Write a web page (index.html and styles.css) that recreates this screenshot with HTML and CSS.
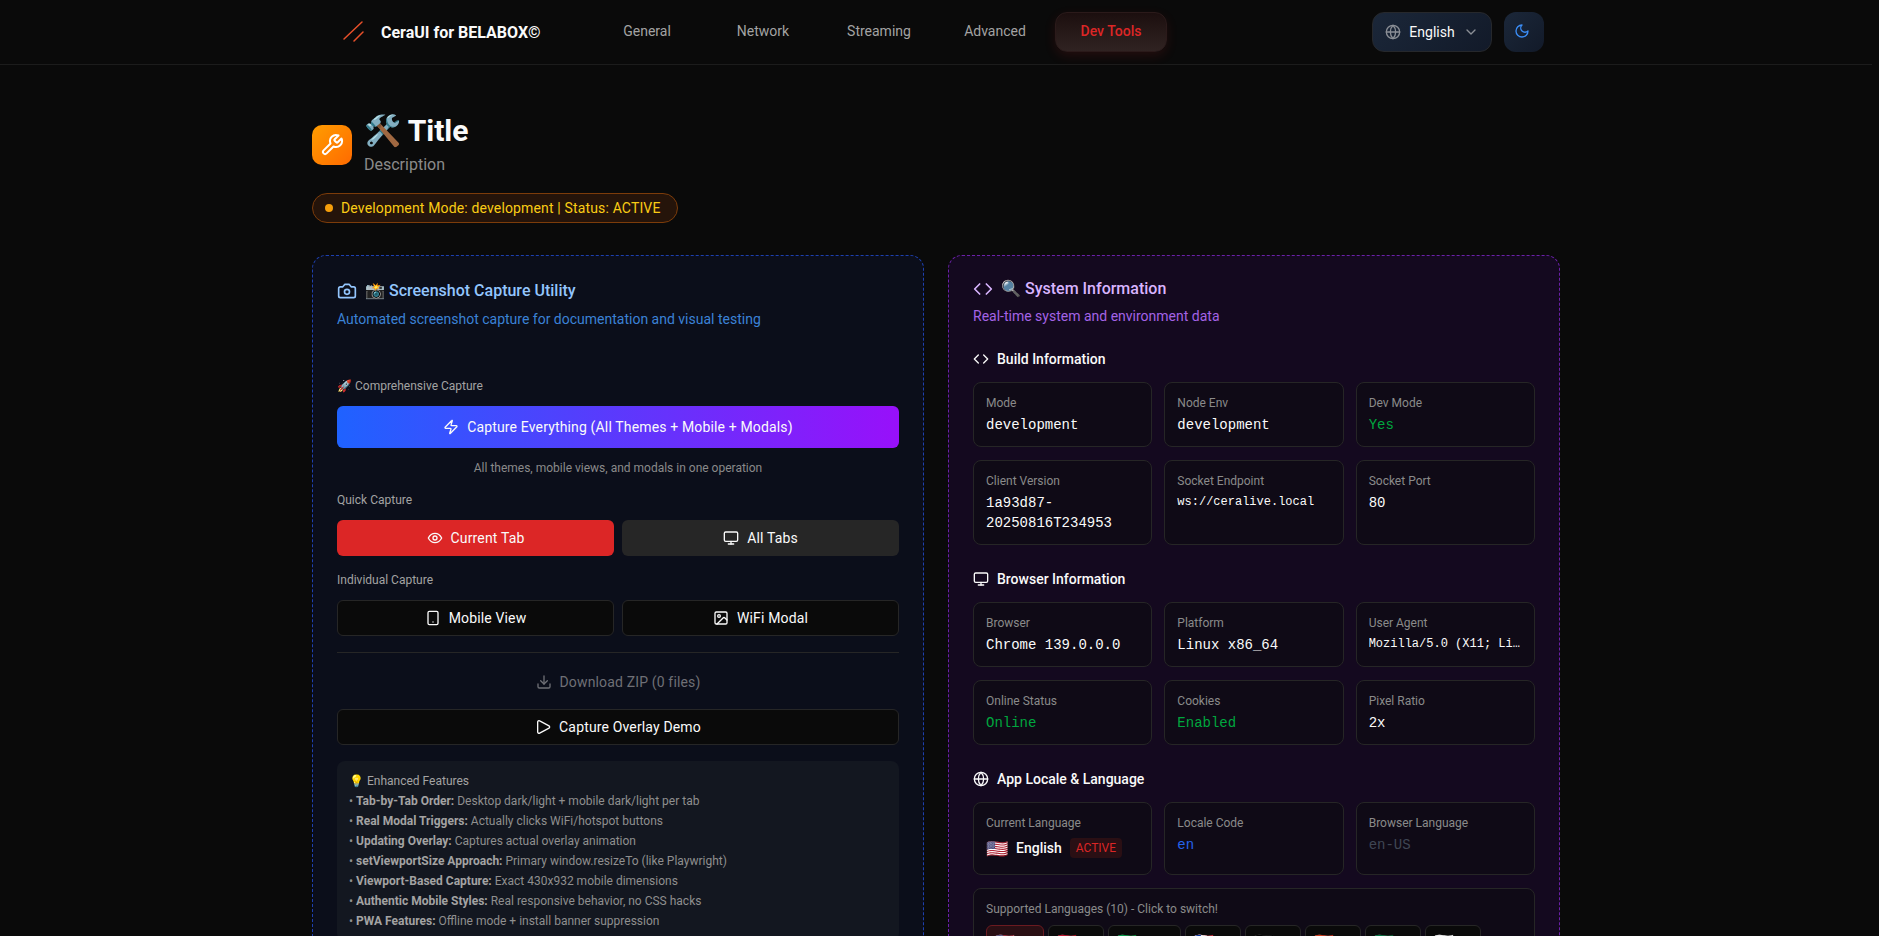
FILE: index.html
```html
<!DOCTYPE html>
<html lang="en">
<head>
  <meta charset="UTF-8" />
  <title>CeraUI Dev Tools</title>
  <link rel="stylesheet" href="styles.css">
</head>
<body>
  <header class="topbar">
    <div class="topbar-inner">
      <a class="brand">
        <svg class="brand-logo" viewBox="0 0 24 24" fill="none" stroke="#e8502a" stroke-width="1.5" stroke-linecap="round"><path d="M4 19 22 2"/><path d="M14 21 23 12"/></svg>
        <span>CeraUI for BELABOX©</span>
      </a>
      <nav class="tabs">
        <a class="tab">General</a>
        <a class="tab">Network</a>
        <a class="tab">Streaming</a>
        <a class="tab">Advanced</a>
        <a class="tab tab-active">Dev Tools</a>
      </nav>
      <div class="top-actions">
        <button class="lang-btn">
          <svg class="ic ic-16 muted" viewBox="0 0 24 24"><circle cx="12" cy="12" r="10"/><path d="M12 2a14.500 14.500 0 0 0 0 20 14.500 14.500 0 0 0 0-20"/><path d="M2 12h20"/></svg>
          <span>English</span>
          <svg class="ic ic-16 muted" viewBox="0 0 24 24"><path d="m6 9 6 6 6-6"/></svg>
        </button>
        <button class="theme-btn">
          <svg class="ic ic-16" viewBox="0 0 24 24"><path d="M12 3a6 6 0 0 0 9 9 9 9 0 1 1-9-9Z"/></svg>
        </button>
      </div>
    </div>
  </header>

  <main class="page">
    <div class="page-head">
      <div class="head-icon">
        <svg class="ic ic-24" viewBox="0 0 24 24"><path d="M14.700 6.300a1 1 0 0 0 0 1.400l1.600 1.600a1 1 0 0 0 1.400 0l3.770-3.770a6 6 0 0 1-7.940 7.940l-6.910 6.910a2.120 2.120 0 0 1-3-3l6.910-6.910a6 6 0 0 1 7.940-7.940l-3.760 3.760z"/></svg>
      </div>
      <div>
        <h1 class="page-title">🛠️ Title</h1>
        <p class="page-desc">Description</p>
      </div>
    </div>
    <div class="mode-pill"><span class="mode-dot"></span>Development Mode: development | Status: ACTIVE</div>

    <div class="columns">
      <section class="panel panel-blue">
        <h2 class="panel-title title-blue">
          <svg class="ic ic-20" viewBox="0 0 24 24"><path d="M14.500 4h-5L7 7H4a2 2 0 0 0-2 2v9a2 2 0 0 0 2 2h16a2 2 0 0 0 2-2V9a2 2 0 0 0-2-2h-3l-2.500-3z"/><circle cx="12" cy="13" r="3"/></svg>
          <span>📸 Screenshot Capture Utility</span>
        </h2>
        <p class="panel-sub sub-blue">Automated screenshot capture for documentation and visual testing</p>

        <div class="label label-first">🚀 Comprehensive Capture</div>
        <button class="btn btn-gradient">
          <svg class="ic ic-16" viewBox="0 0 24 24"><path d="M4 14a1 1 0 0 1-.78-1.630l9.900-10.200a.500.500 0 0 1 .860.460l-1.920 6.020A1 1 0 0 0 13 10h7a1 1 0 0 1 .780 1.630l-9.900 10.200a.500.500 0 0 1-.860-.460l1.920-6.020A1 1 0 0 0 11 14z"/></svg>
          Capture Everything (All Themes + Mobile + Modals)
        </button>
        <p class="hint">All themes, mobile views, and modals in one operation</p>

        <div class="label">Quick Capture</div>
        <div class="btn-row">
          <button class="btn btn-red">
            <svg class="ic ic-16" viewBox="0 0 24 24"><path d="M2 12s3.600-7 10-7 10 7 10 7-3.600 7-10 7-10-7-10-7z"/><circle cx="12" cy="12" r="3"/></svg>
            Current Tab
          </button>
          <button class="btn btn-grey">
            <svg class="ic ic-16" viewBox="0 0 24 24"><rect x="2" y="3" width="20" height="14" rx="2"/><path d="M8 21h8"/><path d="M12 17v4"/></svg>
            All Tabs
          </button>
        </div>

        <div class="label">Individual Capture</div>
        <div class="btn-row">
          <button class="btn btn-dark">
            <svg class="ic ic-16" viewBox="0 0 24 24"><rect x="4.500" y="2" width="15" height="20" rx="2"/><path d="M12 18h.01"/></svg>
            Mobile View
          </button>
          <button class="btn btn-dark">
            <svg class="ic ic-16" viewBox="0 0 24 24"><rect x="3" y="3" width="18" height="18" rx="2"/><circle cx="9" cy="9" r="2"/><path d="m21 15-3.100-3.100a2 2 0 0 0-2.800 0L6 21"/></svg>
            WiFi Modal
          </button>
        </div>

        <hr class="rule">

        <button class="btn btn-ghost">
          <svg class="ic ic-16" viewBox="0 0 24 24"><path d="M21 15v4a2 2 0 0 1-2 2H5a2 2 0 0 1-2-2v-4"/><path d="m7 10 5 5 5-5"/><path d="M12 15V3"/></svg>
          Download ZIP (0 files)
        </button>
        <button class="btn btn-dark btn-wide">
          <svg class="ic ic-16" viewBox="0 0 24 24"><path d="M4 4.500a2 2 0 0 1 3-1.700l14 7.500a2 2 0 0 1 0 3.400l-14 7.500a2 2 0 0 1-3-1.700z"/></svg>
          Capture Overlay Demo
        </button>

        <div class="features">
          <div class="feat-head">💡 Enhanced Features</div>
          <div>• <strong>Tab-by-Tab Order:</strong> Desktop dark/light + mobile dark/light per tab</div>
          <div>• <strong>Real Modal Triggers:</strong> Actually clicks WiFi/hotspot buttons</div>
          <div>• <strong>Updating Overlay:</strong> Captures actual overlay animation</div>
          <div>• <strong>setViewportSize Approach:</strong> Primary window.resizeTo (like Playwright)</div>
          <div>• <strong>Viewport-Based Capture:</strong> Exact 430x932 mobile dimensions</div>
          <div>• <strong>Authentic Mobile Styles:</strong> Real responsive behavior, no CSS hacks</div>
          <div>• <strong>PWA Features:</strong> Offline mode + install banner suppression</div>
        </div>
      </section>

      <section class="panel panel-purple">
        <h2 class="panel-title title-purple">
          <svg class="ic ic-20" viewBox="0 0 24 24"><path d="m16 18 6-6-6-6"/><path d="m8 6-6 6 6 6"/></svg>
          <span>🔍 System Information</span>
        </h2>
        <p class="panel-sub sub-purple">Real-time system and environment data</p>

        <h3 class="group-title">
          <svg class="ic ic-16" viewBox="0 0 24 24"><path d="m16 18 6-6-6-6"/><path d="m8 6-6 6 6 6"/></svg>
          Build Information
        </h3>
        <div class="info-grid">
          <div class="info"><div class="info-key">Mode</div><div class="info-val">development</div></div>
          <div class="info"><div class="info-key">Node Env</div><div class="info-val">development</div></div>
          <div class="info"><div class="info-key">Dev Mode</div><div class="info-val val-green">Yes</div></div>
          <div class="info"><div class="info-key">Client Version</div><div class="info-val">1a93d87-20250816T234953</div></div>
          <div class="info"><div class="info-key">Socket Endpoint</div><div class="info-val val-small">ws://ceralive.local</div></div>
          <div class="info"><div class="info-key">Socket Port</div><div class="info-val">80</div></div>
        </div>

        <h3 class="group-title">
          <svg class="ic ic-16" viewBox="0 0 24 24"><rect x="2" y="3" width="20" height="14" rx="2"/><path d="M8 21h8"/><path d="M12 17v4"/></svg>
          Browser Information
        </h3>
        <div class="info-grid">
          <div class="info"><div class="info-key">Browser</div><div class="info-val">Chrome 139.0.0.0</div></div>
          <div class="info"><div class="info-key">Platform</div><div class="info-val">Linux x86_64</div></div>
          <div class="info"><div class="info-key">User Agent</div><div class="info-val val-small val-clip">Mozilla/5.0 (X11; Li…</div></div>
          <div class="info"><div class="info-key">Online Status</div><div class="info-val val-green">Online</div></div>
          <div class="info"><div class="info-key">Cookies</div><div class="info-val val-green">Enabled</div></div>
          <div class="info"><div class="info-key">Pixel Ratio</div><div class="info-val">2x</div></div>
        </div>

        <h3 class="group-title">
          <svg class="ic ic-16" viewBox="0 0 24 24"><circle cx="12" cy="12" r="10"/><path d="M12 2a14.500 14.500 0 0 0 0 20 14.500 14.500 0 0 0 0-20"/><path d="M2 12h20"/></svg>
          App Locale &amp; Language
        </h3>
        <div class="info-grid">
          <div class="info">
            <div class="info-key">Current Language</div>
            <div class="lang-now"><span class="flag">🇺🇸</span><span>English</span><span class="active-tag">ACTIVE</span></div>
          </div>
          <div class="info"><div class="info-key">Locale Code</div><div class="info-val val-blue">en</div></div>
          <div class="info"><div class="info-key">Browser Language</div><div class="info-val val-dim">en-US</div></div>
        </div>
        <div class="info info-full">
          <div class="info-key">Supported Languages (10) - Click to switch!</div>
          <div class="lang-list">
            <button class="lang-chip chip-on">🇺🇸</button>
            <button class="lang-chip">🇪🇸</button>
            <button class="lang-chip chip-wide">🇧🇷</button>
            <button class="lang-chip">🇫🇷</button>
            <button class="lang-chip">🇩🇪</button>
            <button class="lang-chip">🇨🇳</button>
            <button class="lang-chip">🇸🇦</button>
            <button class="lang-chip">🇯🇵</button>
          </div>
        </div>
      </section>
    </div>
  </main>
</body>
</html>
```

FILE: styles.css
```css
* {
  box-sizing: border-box;
}

html, body {
  height: 100%;
}

body {
  margin: 0;
  padding-right: 7px;
  overflow: hidden;
  background: #0a0a0a;
  color: #fafafa;
  font-family: Roboto, "Noto Sans", sans-serif;
}

button {
  font-family: inherit;
}

.ic {
  flex: none;
  fill: none;
  stroke: currentColor;
  stroke-width: 2;
  stroke-linecap: round;
  stroke-linejoin: round;
}

.ic-16 { width: 16px; height: 16px; }
.ic-20 { width: 20px; height: 20px; }
.ic-24 { width: 24px; height: 24px; }

.muted {
  color: #8b8f96;
}

/* top bar */
.topbar {
  height: 65px;
  border-bottom: 1px solid #1c1c1c;
}

.topbar-inner {
  width: 1280px;
  height: 64px;
  margin: 0 auto;
  padding: 0 32px;
  display: flex;
  align-items: center;
}

.brand {
  display: flex;
  align-items: center;
  gap: 17px;
  width: 263px;
  flex: none;
  font-size: 16px;
  font-weight: 700;
}

.brand-logo {
  width: 24px;
  height: 24px;
  margin-left: 12px;
}

.tabs {
  display: grid;
  grid-template-columns: repeat(5, 112px);
  gap: 4px;
  flex: 1;
}

.tab {
  height: 40px;
  padding-bottom: 2px;
  display: flex;
  align-items: center;
  justify-content: center;
  border: 1px solid transparent;
  border-radius: 12px;
  color: #a3a3a3;
  font-size: 14px;
}

.tab-active {
  color: #dc2626;
  font-weight: 500;
  border-color: #2b1a1a;
  background: linear-gradient(to bottom, #1c0f0f, #302322);
  box-shadow: 0 4px 12px rgba(220, 38, 38, 0.12);
}

.top-actions {
  display: flex;
  align-items: center;
  gap: 12px;
}

.lang-btn {
  width: 120px;
  height: 40px;
  padding: 0 12px;
  display: flex;
  align-items: center;
  justify-content: space-between;
  border: 1px solid #26282c;
  border-radius: 12px;
  background: linear-gradient(135deg, #1b2739, #121a29);
  color: #fafafa;
  font-size: 14px;
}

.theme-btn {
  width: 40px;
  height: 40px;
  padding: 0 4px 3px 0;
  display: flex;
  align-items: center;
  justify-content: center;
  border: none;
  border-radius: 12px;
  background: linear-gradient(135deg, #1b2739, #121a29);
  color: #3b8df6;
}

/* page */
.page {
  width: 1280px;
  margin: 0 auto;
  padding: 48px 16px 0;
}

.page-head {
  display: flex;
  align-items: center;
  gap: 12px;
}

.head-icon {
  width: 40px;
  height: 40px;
  display: flex;
  align-items: center;
  justify-content: center;
  border-radius: 10px;
  background: linear-gradient(135deg, #ff9d00, #ff6a00);
  color: #fff;
}

.page-title {
  margin: 0;
  font-size: 30px;
  line-height: 36px;
  font-weight: 700;
}

.page-desc {
  margin: 4px 0 0;
  color: #8a8a8a;
  font-size: 16px;
  line-height: 24px;
}

.mode-pill {
  width: fit-content;
  height: 30px;
  margin-top: 16px;
  padding: 0 16px 0 12px;
  display: flex;
  align-items: center;
  gap: 8px;
  border: 1px solid #7c3c0a;
  border-radius: 15px;
  background: #25140a;
  color: #facc15;
  font-size: 14px;
  letter-spacing: 0.15px;
}

.mode-dot {
  width: 8px;
  height: 8px;
  border-radius: 50%;
  background: #f59e0b;
}

.columns {
  margin-top: 32px;
  display: grid;
  grid-template-columns: 1fr 1fr;
  gap: 24px;
}

.panel {
  padding: 23px 24px;
  border-radius: 14px;
  border: 1px dashed;
}

.panel-blue {
  border-color: #1e40af;
  background: #0b0e1a;
}

.panel-purple {
  padding-top: 21px;
  border-color: #6b21a8;
  background: #14091f;
}

.panel-title {
  margin: 0;
  display: flex;
  align-items: center;
  gap: 8px;
  font-size: 16px;
  line-height: 24px;
  font-weight: 500;
}

.title-blue { color: #93c5fd; }
.title-purple { color: #d8b4fe; }

.panel-sub {
  margin: 6px 0 0;
  font-size: 14px;
  line-height: 20px;
}

.sub-blue { color: #3b82d6; }

.sub-purple {
  margin-top: 5px;
  color: #a463e6;
}

.label {
  margin-top: 16px;
  color: #a3a3a3;
  font-size: 12px;
  line-height: 16px;
}

.label-first {
  margin-top: 49px;
}

.btn {
  width: 100%;
  height: 36px;
  display: flex;
  align-items: center;
  justify-content: center;
  gap: 8px;
  border: 1px solid transparent;
  border-radius: 6px;
  color: #fafafa;
  font-size: 14px;
  letter-spacing: 0.15px;
}

.btn-gradient {
  height: 42px;
  margin-top: 12px;
  border: none;
  background: linear-gradient(to right, #1f62ff, #9810fa);
}

.hint {
  margin: 12px 0 0;
  color: #8a8a8a;
  font-size: 12px;
  line-height: 16px;
  text-align: center;
}

.btn-row {
  margin-top: 12px;
  display: grid;
  grid-template-columns: 1fr 1fr;
  gap: 8px;
}

.btn-red { background: #dc2626; }
.btn-grey { background: #262626; }

.btn-dark {
  background: #0a0a0a;
  border-color: #262626;
}

.rule {
  margin: 16px 0 11px;
  border: none;
  border-top: 1px solid #262626;
}

.btn-ghost {
  background: transparent;
  color: #6f7076;
}

.btn-wide {
  margin-top: 9px;
}

.features {
  margin-top: 16px;
  padding: 10px 12px;
  border-radius: 8px;
  background: #131720;
  color: #8f8f8f;
  font-size: 12px;
  line-height: 20px;
}

.features strong {
  color: #a3a3a3;
  font-weight: 700;
}

.feat-head {
  color: #a3a3a3;
}

.group-title {
  margin: 24px 0 13px;
  display: flex;
  align-items: center;
  gap: 8px;
  font-size: 14px;
  line-height: 20px;
  font-weight: 500;
}

.sub-purple + .group-title {
  margin-top: 23px;
}

.info-grid {
  display: grid;
  grid-template-columns: repeat(3, 1fr);
  gap: 13px 12px;
}

.info {
  padding: 12px 12px 11px;
  border: 1px solid #262626;
  border-radius: 8px;
  background: #0f0a16;
  min-width: 0;
}

.info-key {
  color: #8a8a8a;
  font-size: 12px;
  line-height: 16px;
}

.info-val {
  margin-top: 4px;
  color: #fafafa;
  font-family: "Liberation Mono", monospace;
  font-size: 14px;
  line-height: 20px;
  overflow-wrap: anywhere;
}

.val-small {
  font-size: 12px;
  line-height: 18px;
}

.val-clip {
  white-space: nowrap;
  overflow: hidden;
}

.val-green { color: #00a63e; }
.val-blue { color: #2563eb; }
.val-dim { color: #3f4654; }

.lang-now {
  height: 28px;
  margin-top: 3px;
  margin-bottom: 1px;
  display: flex;
  align-items: center;
  gap: 8px;
  font-size: 14px;
  font-weight: 500;
}

.flag {
  font-size: 18px;
}

.active-tag {
  padding: 2px 6px;
  border-radius: 4px;
  background: #2a0f14;
  color: #dc2626;
  font-size: 12px;
  line-height: 16px;
  font-weight: 400;
}

.info-full {
  margin-top: 13px;
}

.lang-list {
  margin-top: 8px;
  display: flex;
  flex-wrap: wrap;
  gap: 4px;
}

.lang-chip {
  width: 56px;
  padding: 6px 0 8px 8px;
  border: 1px solid #262626;
  border-radius: 6px;
  background: #0a0a0a;
  font-size: 16px;
  line-height: 20px;
  text-align: left;
}

.chip-wide {
  width: 73px;
}

.chip-on {
  width: 58px;
  border-color: #6b1a20;
  background: #2a0f14;
}
```
